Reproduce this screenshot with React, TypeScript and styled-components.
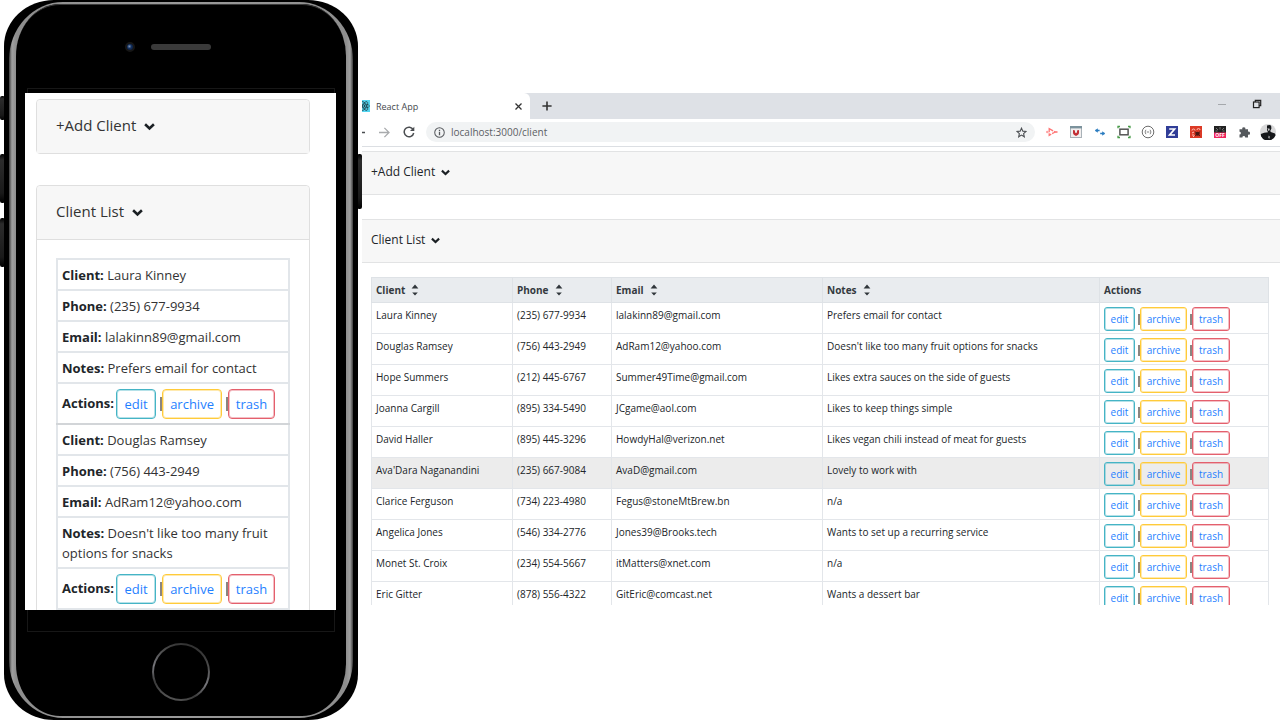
import React from "react";
import styled, { createGlobalStyle } from "styled-components";

const GlobalStyle = createGlobalStyle`
  *, *::before, *::after { box-sizing: border-box; }
  body {
    margin: 0;
    background: #fff;
    color: #212529;
    font-family: "Open Sans", "Noto Sans", sans-serif;
  }
  button, input { font: inherit; color: inherit; }
`;

const Page = styled.main`
  display: flex;
  height: 100vh;
  min-height: 480px;
  overflow: hidden;
`;

/* ---------- Phone ---------- */

const Phone = styled.section`
  position: relative;
  flex: none;
  width: 362px;
  padding: 0 4px;
  display: flex;
`;

const SideKey = styled.span<{ $side: "left" | "right"; $top: number; $length: number }>`
  position: absolute;
  ${(p) => p.$side}: 0;
  top: ${(p) => p.$top}px;
  width: 5px;
  height: ${(p) => p.$length}px;
  border-radius: 2px;
  background: linear-gradient(#000, #2c2c2c 12%, #1a1a1a 80%, #000);
`;

const PhoneBody = styled.div`
  position: relative;
  flex: 1;
  display: flex;
  padding: 2px 5px;
  border-radius: 50px / 46px;
  background: #000;
`;

const PhoneRim = styled.div`
  flex: 1;
  display: flex;
  padding: 2px 7px;
  border-radius: 54px / 58px;
  background: linear-gradient(90deg, #3c3c3c, #a0a0a0 3px, #8e8e8e 7px, #9a9a9a 50%, #8e8e8e calc(100% - 7px), #a0a0a0 calc(100% - 3px), #3c3c3c);
`;

const PhoneFace = styled.div`
  position: relative;
  flex: 1;
  display: flex;
  flex-direction: column;
  min-width: 0;
  padding: 0 10px 0 9px;
  border-radius: 44px / 52px;
  background: #000;
  box-shadow: inset 0 2px 0 -1px #3a3a3a;

  &::before {
    content: "";
    position: absolute;
    inset: 84px 11px;
    border: 1px solid #171717;
  }
`;

const Earpiece = styled.div`
  flex: none;
  display: flex;
  align-items: center;
  justify-content: center;
  gap: 16px;
  height: 89px;
  padding: 0 26px 4px 0;
`;

const Camera = styled.span`
  width: 10px;
  height: 10px;
  border: 2px solid #161616;
  border-radius: 50%;
  background: radial-gradient(circle at 40% 40%, #7f93b4, #12305f 40%, #0a1530);
`;

const Speaker = styled.span`
  width: 60px;
  height: 6px;
  border-radius: 3px;
  background: #3a3a3a;
`;

const HomeArea = styled.div`
  flex: none;
  display: flex;
  justify-content: center;
  height: 106px;
  padding-top: 33px;
`;

const HomeButton = styled.button`
  width: 58px;
  height: 58px;
  padding: 2px;
  border: 0;
  border-radius: 50%;
  background: linear-gradient(200deg, #222, #4a4a4a 30%, #77777c 55%, #3a3a3a 75%, #6a6a6a);

  &::before {
    content: "";
    display: block;
    width: 100%;
    height: 100%;
    border-radius: 50%;
    background: #000;
  }
`;

const PhoneScreen = styled.div`
  position: relative;
  flex: 1;
  min-height: 0;
  overflow: hidden;
  padding: 6px 26px 0 11px;
  background: #fff;
`;

const MobileCard = styled.section`
  margin-bottom: 31px;
  border: 1px solid #dfdfdf;
  border-radius: 4px;
`;

const MobileCardHeader = styled.button<{ $open?: boolean }>`
  display: flex;
  align-items: center;
  gap: 8px;
  width: 100%;
  height: ${(p) => (p.$open ? 54 : 53)}px;
  padding: 0 19px 3px;
  border: 0;
  border-bottom: ${(p) => (p.$open ? "1px solid #dfdfdf" : "0")};
  border-radius: 4px 4px 0 0;
  background: #f7f7f7;
  color: #333;
  font-size: 15px;
  line-height: 20px;

  > svg { margin-top: 2px; }
`;

const MobileCardBody = styled.div`
  padding: 18px 19px;
`;

const MobileTable = styled.table`
  width: 100%;
  border-collapse: collapse;
  border: 2px solid #e2e6ea;
  font-size: 13px;
  line-height: 20px;
`;

const MobileGroup = styled.tbody`
  & + & { border-top: 2px solid #d2d5d8; }
`;

const MobileRow = styled.tr`
  & + & { border-top: 2px solid #e2e6ea; }
`;

const MobileCell = styled.td<{ $actions?: boolean }>`
  height: ${(p) => (p.$actions ? 41 : 31)}px;
  padding: 5px 4px 4px;
  color: #333;

  strong { color: #212529; }
`;

const InlineActions = styled.div`
  display: flex;
  align-items: flex-start;
  gap: 2px;

  > strong { padding-top: 4px; }
`;

/* ---------- Shared action buttons ---------- */

const tones = {
  edit: { line: "#45b4c5", glow: "#45b4c566", small: 31, large: 40 },
  archive: { line: "#ffcb3a", glow: "#ffcb3a66", small: 47, large: 60 },
  trash: { line: "#e4606d", glow: "#e4606d66", small: 38, large: 47 },
};

const Actions = styled.div<{ $large?: boolean }>`
  display: flex;
  align-items: ${(p) => (p.$large ? "flex-start" : "center")};
`;

const ActionButton = styled.button<{ $tone: keyof typeof tones; $large?: boolean }>`
  height: ${(p) => (p.$large ? 30 : 24)}px;
  width: ${(p) => (p.$large ? tones[p.$tone].large : tones[p.$tone].small)}px;
  padding: 0;
  border: 1px solid ${(p) => tones[p.$tone].line};
  border-radius: ${(p) => (p.$large ? 4 : 3)}px;
  box-shadow: inset 0 0 0 1px ${(p) => tones[p.$tone].glow};
  background: transparent;
  color: #1f7fff;
  font-size: ${(p) => (p.$large ? 13 : 10)}px;
  line-height: 16px;
`;

const Divider = styled.span<{ $large?: boolean }>`
  flex: none;
  width: 2px;
  height: ${(p) => (p.$large ? 14 : 11)}px;
  margin: ${(p) => (p.$large ? "8px 0 0 4px" : "0 0 0 3px")};
  background: #8a8580;
`;

/* ---------- Browser ---------- */

const Browser = styled.section`
  flex: 1;
  min-width: 0;
  display: flex;
  flex-direction: column;
  margin: 93px 0 115px;
  overflow: hidden;
`;

const TabStrip = styled.div`
  flex: none;
  display: flex;
  align-items: stretch;
  height: 26px;
  background: #dee1e6;
`;

const Tab = styled.div`
  display: flex;
  align-items: center;
  gap: 6px;
  width: 168px;
  padding-right: 7px;
  border-radius: 0 6px 0 0;
  background: #fff;
  color: #45494d;
  font-size: 9px;
  overflow: hidden;

  > svg:first-child { flex: none; margin-left: -4px; }
  > span { flex: 1; }
`;

const IconButton = styled.button`
  display: flex;
  align-items: center;
  justify-content: center;
  flex: none;
  padding: 0;
  border: 0;
  background: none;
  color: #333;
`;

const NewTab = styled(IconButton)`
  width: 34px;
`;

const WindowControls = styled.div`
  display: flex;
  gap: 26px;
  margin-left: auto;
  padding: 0 18px 4px 0;
`;

const Toolbar = styled.div`
  flex: none;
  display: flex;
  align-items: center;
  height: 28px;
  padding: 0 4px 1px 0;
  border-bottom: 1px solid #dcdfe3;
`;

const NavButtons = styled.div`
  flex: none;
  display: flex;
  align-items: center;
  gap: 13px;
  margin-left: -8px;
  padding-right: 11px;
`;

const AddressBar = styled.label`
  flex: 1;
  display: flex;
  align-items: center;
  gap: 6px;
  height: 20px;
  padding: 0 8px 0 8px;
  border-radius: 10px;
  background: #f1f3f4;
`;

const AddressInput = styled.input`
  flex: 1;
  min-width: 0;
  padding: 0;
  border: 0;
  outline: 0;
  background: transparent;
  color: #5c6064;
  font-size: 10px;
  line-height: 16px;
`;

const Extensions = styled.div`
  flex: none;
  display: flex;
  align-items: center;
  gap: 8px;
  padding-left: 9px;
`;

const WebPage = styled.div`
  flex: 1;
  min-height: 0;
  overflow: hidden;
  padding-top: 4px;
`;

const CardHeader = styled.button`
  display: flex;
  align-items: center;
  gap: 6px;
  width: 100%;
  height: 44px;
  padding: 0 9px 3px;
  border: 0;
  border-top: 1px solid #e2e3e4;
  border-bottom: 1px solid #e2e3e4;
  background: #f7f7f7;
  color: #212529;
  font-size: 12px;
  line-height: 16px;

  > svg { margin-top: 2px; }
`;

const DesktopCard = styled.section`
  margin-bottom: 24px;
`;

const TableWrap = styled.div`
  padding: 14px 12px 0 9px;
`;

const ClientTable = styled.table`
  width: 100%;
  table-layout: fixed;
  border-collapse: collapse;
  font-size: 10px;
  line-height: 16px;
`;

const HeadCell = styled.th`
  height: 25px;
  padding: 0 4px;
  border: 1px solid #dee2e6;
  background: #e9ecef;
  color: #343a40;
  font-weight: 700;
  text-align: left;
`;

const SortButton = styled.button`
  display: inline-flex;
  align-items: center;
  gap: 6px;
  padding: 0;
  border: 0;
  background: none;
`;

const BodyRow = styled.tr<{ $active?: boolean }>`
  background: ${(p) => (p.$active ? "#ececec" : "#fff")};
`;

const BodyCell = styled.td`
  height: 31px;
  padding: 4px 4px 2px;
  border: 1px solid #e3e6ea;
  vertical-align: top;
  white-space: nowrap;
`;

/* ---------- Icons ---------- */

const Chevron = ({ size = 9 }: { size?: number }) => (
  <svg width={size} height={size} viewBox="0 0 12 12" fill="none" stroke="#1b2024" strokeWidth="2.8" aria-hidden="true">
    <path d="M1.2 3.500l4.800 4.600 4.800-4.600" />
  </svg>
);

const SortIcon = () => (
  <svg width="8" height="12" viewBox="0 0 8 12" fill="#30363b" aria-hidden="true">
    <path d="M4 .5l3.400 4.100H.6zM1.200 8.400h5.600L4 11.600z" />
  </svg>
);

const ReactIcon = () => (
  <svg width="12" height="12" viewBox="0 0 12 12" aria-hidden="true">
    <rect width="12" height="12" fill="#53d5f0" />
    <g fill="none" stroke="#1d3d47" strokeWidth="0.7">
      <ellipse cx="6.500" cy="6" rx="5" ry="2" />
      <ellipse cx="6.500" cy="6" rx="5" ry="2" transform="rotate(60 6.500 6)" />
      <ellipse cx="6.500" cy="6" rx="5" ry="2" transform="rotate(120 6.500 6)" />
    </g>
    <circle cx="6.500" cy="6" r="1" fill="#1d3d47" />
  </svg>
);

const CloseIcon = () => (
  <svg width="9" height="9" viewBox="0 0 9 9" stroke="#333" strokeWidth="1.3" aria-hidden="true">
    <path d="M1.500 1.500l6 6M7.500 1.500l-6 6" />
  </svg>
);

const PlusIcon = () => (
  <svg width="10" height="10" viewBox="0 0 10 10" stroke="#333" strokeWidth="1.6" aria-hidden="true">
    <path d="M5 .4v9.200M.4 5h9.200" />
  </svg>
);

const BackIcon = () => (
  <svg width="11" height="11" viewBox="0 0 11 11" fill="none" stroke="#4a4d50" strokeWidth="1.4" aria-hidden="true">
    <path d="M11 5.500H1M5.600.9L1 5.500l4.600 4.600" />
  </svg>
);

const ForwardIcon = () => (
  <svg width="12" height="11" viewBox="0 0 12 11" fill="none" stroke="#a9abad" strokeWidth="1.3" aria-hidden="true">
    <path d="M1 5.500h10M6.400.9L11 5.500l-4.600 4.600" />
  </svg>
);

const ReloadIcon = () => (
  <svg width="12" height="12" viewBox="0 0 12 12" fill="none" stroke="#4a4d50" strokeWidth="1.5" aria-hidden="true">
    <path d="M10.200 3.600A4.800 4.800 0 1 0 10.700 7" />
    <path d="M11.300.8v4.300H7z" fill="#4a4d50" stroke="none" />
  </svg>
);

const InfoIcon = () => (
  <svg width="11" height="11" viewBox="0 0 12 12" fill="none" stroke="#55585c" strokeWidth="1.1" aria-hidden="true">
    <circle cx="6" cy="6" r="5.2" />
    <path d="M6 5.200v3.800M6 3v1.300" strokeWidth="1.4" />
  </svg>
);

const StarIcon = () => (
  <svg width="11" height="11" viewBox="0 0 24 24" fill="none" stroke="#4d5054" strokeWidth="2.4" aria-hidden="true">
    <path d="M12 2.500l2.900 6.500 7 .7-5.300 4.700 1.600 6.900L12 17.700l-6.200 3.600 1.600-6.900L2.100 9.700l7-.7z" />
  </svg>
);

const Ext = ({ children, size = 12 }: { children: React.ReactNode; size?: number }) => (
  <svg width="16" height="16" viewBox={size === 16 ? "0 0 16 16" : "-2 -2 16 16"} aria-hidden="true">{children}</svg>
);

const MinimizeIcon = () => (
  <svg width="8" height="10" viewBox="0 0 8 10" stroke="#a5a8ac" aria-hidden="true"><path d="M0 5.500h8" /></svg>
);

const RestoreIcon = () => (
  <svg width="10" height="10" viewBox="0 0 10 10" fill="none" stroke="#222" strokeWidth="1.2" aria-hidden="true">
    <rect x="1.500" y="3" width="5.600" height="5.600" />
    <path d="M3.300 3V1.300h5.400v5.400H7.100" />
  </svg>
);

const extensionIcons: { name: string; icon: React.ReactNode }[] = [
  {
    name: "Recorder",
    icon: (
      <Ext>
        <path d="M3.200 2.700L9 6 3.200 9.300z" fill="none" stroke="#ff7676" strokeWidth="1.300" strokeDasharray="4.500 1" />
        <circle cx="1.300" cy="6" r="1.300" fill="#ffa3a3" />
        <path d="M9 6h2.500" stroke="#ff8585" strokeWidth="1.800" />
      </Ext>
    ),
  },
  {
    name: "Shield",
    icon: (
      <Ext>
        <rect x=".5" y=".5" width="11" height="11" fill="#f1eeee" stroke="#a9b2b8" />
        <rect width="12" height="2.400" fill="#7b929c" />
        <path d="M3 4l2 .6v1.700l1 .9 1-.9V4.600L9 4v3.300Q8.800 9 6 10 3.200 9 3 7.300z" fill="#c32f35" />
      </Ext>
    ),
  },
  {
    name: "Redirect",
    icon: (
      <Ext>
        <g fill="#2b7cc0" stroke="#2b7cc0" strokeWidth=".6">
          <path d="M3.500 2.800v3.400L1 4.500zM8.500 5.800v3.400L11 7.500z" />
          <path d="M3 4.500h2.600M6.200 7.500h2.800" strokeWidth="1.300" />
        </g>
      </Ext>
    ),
  },
  {
    name: "Screenshot",
    icon: (
      <Ext>
        <rect x="1.900" y="3.200" width="8.200" height="5.600" fill="#fff" stroke="#555" strokeWidth="1.500" />
        <path d="M0 2.200V.5h2M10 .5h2v1.700M12 9.800v1.700h-2M2 11.500H0V9.800" fill="none" stroke="#4a9c4a" strokeWidth="1.300" />
      </Ext>
    ),
  },
  {
    name: "Code",
    icon: (
      <Ext>
        <circle cx="6" cy="6" r="5.800" fill="none" stroke="#6c6c6c" />
        <path d="M3.900 3.800Q2.200 6 3.900 8.200M8.100 3.800Q9.800 6 8.100 8.200M4.800 6h2.400" fill="none" stroke="#777" strokeWidth=".9" />
      </Ext>
    ),
  },
  {
    name: "Notes",
    icon: (
      <Ext>
        <rect width="12" height="12" fill="#303d97" />
        <path d="M3.200 3h5.400L3.600 9H9" fill="none" stroke="#fff" strokeWidth="1.700" />
      </Ext>
    ),
  },
  {
    name: "Bug",
    icon: (
      <Ext>
        <rect width="12" height="12" fill="#dc3a26" />
        <path d="M2 4.500a1.500 1.500 0 1 1 3 0M7 4a1.500 1.500 0 1 1 3 0M2 9h2M2 7l2-1M3 11l1.500-1.500" fill="none" stroke="#ffc1b5" />
        <ellipse cx="7.500" cy="7.800" rx="2.200" ry="2" fill="#4a1712" />
        <path d="M4.800 5.500l5.400 4.600M10.200 5.500L5 10" stroke="#4a1712" strokeWidth=".9" />
      </Ext>
    ),
  },
  {
    name: "Blocker",
    icon: (
      <Ext>
        <rect width="12" height="12" fill="#222" />
        <path d="M2 2l2 2M10 2L8 4M6 1v2.500M1.500 5h2M8.500 5h2" stroke="#888" strokeWidth=".8" />
        <rect y="6.500" width="12" height="5.500" fill="#f0245c" />
        <text x="6" y="11.200" fontSize="5" fontWeight="700" textAnchor="middle" fill="#fff">OFF</text>
      </Ext>
    ),
  },
  {
    name: "Extensions",
    icon: (
      <Ext>
        <path d="M1.500 3.200h2.900a1.500 1.500 0 1 1 2.800 0H10v2.600a1.500 1.500 0 1 1 0 2.800v2.900H7.200a1.400 1.400 0 1 0-2.800 0H1.500V8.600a1.400 1.400 0 1 0 0-2.800z" fill="#54585c" />
      </Ext>
    ),
  },
  {
    name: "Profile",
    icon: (
      <Ext size={16}>
        <circle cx="8" cy="8" r="8" fill="#d9d9da" />
        <path d="M7 1.500q3.500-1.500 4.200.8l.2 2.200-1.100 2.200.4 1.300 4.300 1.400.6 1.800A8 8 0 0 1 1 12.300L.8 10l3.400-1.200L8 8.200 7 6z" fill="#15171a" />
        <path d="M7.400 4.300l2.400.5-.4 1.700-1 .4zM8.800 11.500l1 1.300-.6 2.200-.9-1.600z" fill="#c5c5c5" />
      </Ext>
    ),
  },
];

/* ---------- Data ---------- */

interface Client { name: string; phone: string; email: string; notes: string }

const clients: Client[] = [
  { name: "Laura Kinney", phone: "(235) 677-9934", email: "lalakinn89@gmail.com", notes: "Prefers email for contact" },
  { name: "Douglas Ramsey", phone: "(756) 443-2949", email: "AdRam12@yahoo.com", notes: "Doesn't like too many fruit options for snacks" },
  { name: "Hope Summers", phone: "(212) 445-6767", email: "Summer49Time@gmail.com", notes: "Likes extra sauces on the side of guests" },
  { name: "Joanna Cargill", phone: "(895) 334-5490", email: "JCgame@aol.com", notes: "Likes to keep things simple" },
  { name: "David Haller", phone: "(895) 445-3296", email: "HowdyHal@verizon.net", notes: "Likes vegan chili instead of meat for guests" },
  { name: "Ava'Dara Naganandini", phone: "(235) 667-9084", email: "AvaD@gmail.com", notes: "Lovely to work with" },
  { name: "Clarice Ferguson", phone: "(734) 223-4980", email: "Fegus@stoneMtBrew.bn", notes: "n/a" },
  { name: "Angelica Jones", phone: "(546) 334-2776", email: "Jones39@Brooks.tech", notes: "Wants to set up a recurring service" },
  { name: "Monet St. Croix", phone: "(234) 554-5667", email: "itMatters@xnet.com", notes: "n/a" },
  { name: "Eric Gitter", phone: "(878) 556-4322", email: "GitEric@comcast.net", notes: "Wants a dessert bar" },
];

const columns = [
  { label: "Client", width: 141, sortable: true },
  { label: "Phone", width: 99, sortable: true },
  { label: "Email", width: 211, sortable: true },
  { label: "Notes", width: 277, sortable: true },
  { label: "Actions", width: 169, sortable: false },
];

const ClientActions = ({ large }: { large?: boolean }) => (
  <Actions $large={large}>
    <ActionButton $tone="edit" $large={large}>edit</ActionButton>
    <Divider $large={large} />
    <ActionButton $tone="archive" $large={large}>archive</ActionButton>
    <Divider $large={large} />
    <ActionButton $tone="trash" $large={large}>trash</ActionButton>
  </Actions>
);

const MobileClient = ({ client }: { client: Client }) => (
  <MobileGroup>
    <MobileRow><MobileCell><strong>Client:</strong> {client.name}</MobileCell></MobileRow>
    <MobileRow><MobileCell><strong>Phone:</strong> {client.phone}</MobileCell></MobileRow>
    <MobileRow><MobileCell><strong>Email:</strong> {client.email}</MobileCell></MobileRow>
    <MobileRow><MobileCell><strong>Notes:</strong> {client.notes}</MobileCell></MobileRow>
    <MobileRow>
      <MobileCell $actions>
        <InlineActions><strong>Actions:</strong><ClientActions large /></InlineActions>
      </MobileCell>
    </MobileRow>
  </MobileGroup>
);

const PhoneMockup = () => (
  <Phone>
    <SideKey $side="left" $top={96} $length={24} />
    <SideKey $side="left" $top={154} $length={49} />
    <SideKey $side="left" $top={218} $length={49} />
    <SideKey $side="right" $top={154} $length={55} />
    <PhoneBody>
      <PhoneRim>
        <PhoneFace>
          <Earpiece><Camera /><Speaker /></Earpiece>
          <PhoneScreen>
            <MobileCard>
              <MobileCardHeader>+Add Client <Chevron size={11} /></MobileCardHeader>
            </MobileCard>
            <MobileCard>
              <MobileCardHeader $open>Client List <Chevron size={11} /></MobileCardHeader>
              <MobileCardBody>
                <MobileTable>
                  {clients.slice(0, 2).map((c) => <MobileClient key={c.name} client={c} />)}
                </MobileTable>
              </MobileCardBody>
            </MobileCard>
          </PhoneScreen>
          <HomeArea><HomeButton aria-label="Home" /></HomeArea>
        </PhoneFace>
      </PhoneRim>
    </PhoneBody>
  </Phone>
);

const BrowserWindow = () => (
  <Browser>
    <TabStrip>
      <Tab>
        <ReactIcon />
        <span>React App</span>
        <IconButton aria-label="Close tab"><CloseIcon /></IconButton>
      </Tab>
      <NewTab aria-label="New tab"><PlusIcon /></NewTab>
      <WindowControls>
        <IconButton aria-label="Minimize"><MinimizeIcon /></IconButton>
        <IconButton aria-label="Restore"><RestoreIcon /></IconButton>
      </WindowControls>
    </TabStrip>
    <Toolbar>
      <NavButtons>
        <IconButton aria-label="Back"><BackIcon /></IconButton>
        <IconButton aria-label="Forward"><ForwardIcon /></IconButton>
        <IconButton aria-label="Reload"><ReloadIcon /></IconButton>
      </NavButtons>
      <AddressBar>
        <InfoIcon />
        <AddressInput aria-label="Address" defaultValue="localhost:3000/client" />
        <StarIcon />
      </AddressBar>
      <Extensions>
        {extensionIcons.map((e) => <IconButton key={e.name} aria-label={e.name}>{e.icon}</IconButton>)}
      </Extensions>
    </Toolbar>
    <WebPage>
      <DesktopCard><CardHeader>+Add Client <Chevron /></CardHeader></DesktopCard>
      <DesktopCard>
        <CardHeader>Client List <Chevron /></CardHeader>
        <TableWrap>
          <ClientTable>
            <colgroup>{columns.map((c) => <col key={c.label} width={c.width} />)}</colgroup>
            <thead>
              <tr>
                {columns.map((c) => (
                  <HeadCell key={c.label} scope="col">
                    {c.sortable ? <SortButton>{c.label} <SortIcon /></SortButton> : c.label}
                  </HeadCell>
                ))}
              </tr>
            </thead>
            <tbody>
              {clients.map((c, i) => (
                <BodyRow key={c.name} $active={i === 5}>
                  <BodyCell>{c.name}</BodyCell>
                  <BodyCell>{c.phone}</BodyCell>
                  <BodyCell>{c.email}</BodyCell>
                  <BodyCell>{c.notes}</BodyCell>
                  <BodyCell><ClientActions /></BodyCell>
                </BodyRow>
              ))}
            </tbody>
          </ClientTable>
        </TableWrap>
      </DesktopCard>
    </WebPage>
  </Browser>
);

export default function App() {
  return (
    <>
      <GlobalStyle />
      <Page>
        <PhoneMockup />
        <BrowserWindow />
      </Page>
    </>
  );
}
